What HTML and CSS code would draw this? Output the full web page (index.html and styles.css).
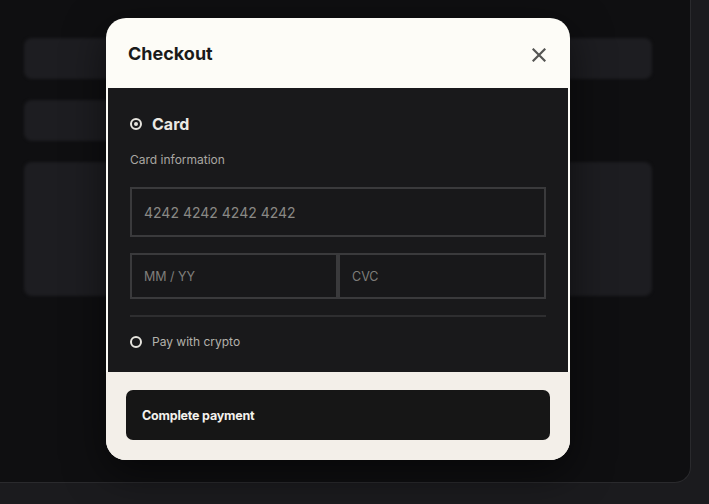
FILE: index.html
```html
<!DOCTYPE html>
<html lang="en">
<head>
<meta charset="utf-8">
<title>Checkout</title>
<link rel="stylesheet" href="styles.css">
</head>
<body>
<div class="page">
  <div class="skeleton">
    <div class="sk sk-bar"></div>
    <div class="sk sk-bar sk-short"></div>
    <div class="sk sk-card"></div>
  </div>
</div>

<div class="modal" role="dialog" aria-label="Checkout">
  <div class="modal-head">
    <h2 class="modal-title">Checkout</h2>
    <button class="close" aria-label="Close">
      <svg width="14" height="14" viewBox="0 0 14 14"><path d="M1.5 1.5 L12.5 12.5 M12.5 1.5 L1.5 12.5" stroke="#555553" stroke-width="2.2" stroke-linecap="square" fill="none"/></svg>
    </button>
  </div>
  <div class="modal-body">
    <div class="method method-active">
      <span class="radio radio-on"></span>
      <span class="method-name">Card</span>
    </div>
    <div class="field-label">Card information</div>
    <div class="input input-lg">4242 4242 4242 4242</div>
    <div class="input-row">
      <div class="input input-sm">MM / YY</div>
      <div class="input input-sm">CVC</div>
    </div>
    <div class="sep"></div>
    <div class="method method-alt">
      <span class="radio"></span>
      <span class="method-sub">Pay with crypto</span>
    </div>
  </div>
  <div class="modal-foot">
    <button class="pay">Complete payment</button>
  </div>
</div>
</body>
</html>
```
FILE: styles.css
```css
* { box-sizing: border-box; }
html, body { margin: 0; padding: 0; }
body {
  background: #1b1b1e;
  font-family: Inter, "Noto Sans", "Liberation Sans", sans-serif;
  width: 709px;
  height: 504px;
  overflow: hidden;
  position: relative;
}
.page {
  width: 691px;
  height: 483px;
  background: #0f0f11;
  border-right: 1px solid #2a2a2d;
  border-bottom: 1px solid #2a2a2d;
  border-bottom-right-radius: 16px;
  padding: 38px 0 0 24px;
}
.skeleton {
  display: flex;
  flex-direction: column;
  gap: 21px;
  width: 628px;
  filter: blur(1.5px);
}
.sk {
  background: #1d1d21;
  border-radius: 8px;
}
.sk-bar { height: 41px; }
.sk-short { width: 520px; }
.sk-card { height: 134px; }

.modal {
  position: absolute;
  left: 106px;
  top: 18px;
  width: 464px;
  height: 442px;
  background: #fdfcf7;
  border-radius: 20px;
  overflow: hidden;
  display: flex;
  flex-direction: column;
  box-shadow: 0 12px 40px rgba(0,0,0,0.55);
}
.modal-head {
  height: 70px;
  display: flex;
  align-items: center;
  justify-content: space-between;
  padding: 0 23px 0 22px;
}
.modal-title {
  margin: 0;
  font-size: 18px;
  font-weight: 700;
  color: #1a1a1a;
}
.close {
  background: none;
  border: 0;
  padding: 0;
  width: 16px;
  height: 16px;
  margin-top: 4px;
  display: flex;
  align-items: center;
  justify-content: center;
}
.modal-body {
  margin: 0 2px;
  background: #19191b;
  padding: 26px 22px 22px 22px;
}
.method {
  display: flex;
  align-items: center;
  gap: 10px;
}
.method-active { height: 20px; }
.method-alt { height: 16px; margin-top: 17px; }
.radio {
  width: 12px;
  height: 12px;
  border: 2px solid #e6e4de;
  border-radius: 50%;
  display: flex;
  align-items: center;
  justify-content: center;
}
.radio-on::after {
  content: "";
  width: 4px;
  height: 4px;
  border-radius: 50%;
  background: #e6e4de;
}
.method-name {
  font-size: 16px;
  font-weight: 700;
  line-height: 20px;
  color: #ebe9e3;
}
.method-sub {
  font-size: 12px;
  line-height: 16px;
  color: #b3b1ab;
}
.field-label {
  margin-top: 18px;
  font-size: 12px;
  line-height: 16px;
  color: #a9a7a2;
}
.input {
  border: 2px solid #3a3a3c;
  background: #18181a;
  display: flex;
  align-items: center;
  padding-left: 12px;
  color: #8a8985;
}
.input-lg {
  margin-top: 19px;
  height: 50px;
  font-size: 14px;
}
.input-row {
  margin-top: 16px;
  display: grid;
  grid-template-columns: 1fr 1fr;
}
.input-sm {
  height: 46px;
  font-size: 12.5px;
  color: #7f7e7a;
}
.sep {
  margin-top: 16px;
  height: 2px;
  background: #2e2e30;
}
.modal-foot {
  flex: 1;
  background: #f3efe9;
  padding: 18px 20px 20px;
}
.pay {
  width: 100%;
  height: 50px;
  border: 0;
  border-radius: 7px;
  background: #161616;
  color: #f3f1ec;
  font-family: inherit;
  font-size: 12.5px;
  font-weight: 700;
  letter-spacing: -0.2px;
  text-align: left;
  padding: 0 16px;
}
```
